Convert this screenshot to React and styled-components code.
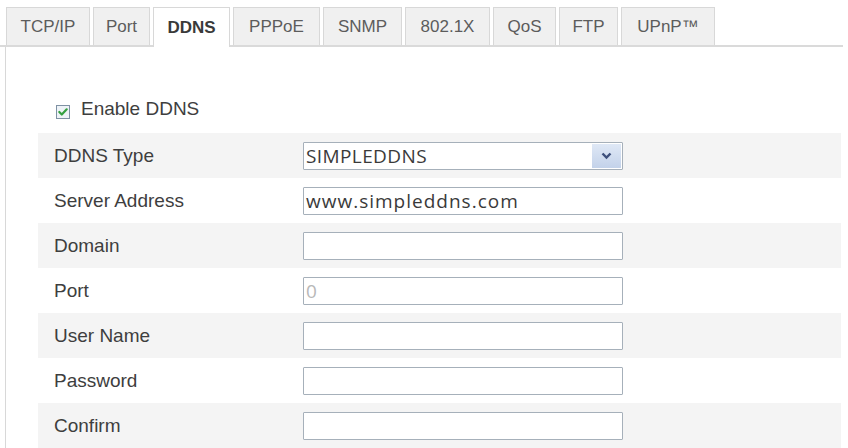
import React from 'react';
import styled, { createGlobalStyle } from 'styled-components';

const GlobalStyle = createGlobalStyle`
  html, body {
    margin: 0;
    padding: 0;
    background: #ffffff;
  }
  body {
    font-family: "Liberation Sans", Arial, sans-serif;
  }
`;

const Page = styled.div`
  width: 848px;
  height: 448px;
  overflow: hidden;
  padding-top: 7px;
  box-sizing: border-box;
  display: flex;
  flex-direction: column;
`;

const TabBar = styled.div`
  display: flex;
  gap: 3px;
  height: 38px;
  padding-left: 6px;
  margin-right: 5px;
  border-bottom: 2px solid #dadada;
`;

const Tab = styled.div`
  width: ${p => p.$width}px;
  box-sizing: border-box;
  display: flex;
  align-items: center;
  justify-content: center;
  font-size: 17px;
  color: ${p => (p.$active ? '#3a3a3a' : '#5c5c5c')};
  font-weight: ${p => (p.$active ? 'bold' : 'normal')};
  background: ${p => (p.$active ? '#ffffff' : '#f0f0f0')};
  border: 1px solid #d8d8d8;
  border-bottom: none;
  height: ${p => (p.$active ? '40px' : '38px')};
  position: relative;
  z-index: ${p => (p.$active ? 1 : 0)};
`;

const Panel = styled.div`
  flex: 1;
  margin-left: 5px;
  border-left: 1px solid #d8d8d8;
  padding-top: 54px;
  display: flex;
  flex-direction: column;
`;

const EnableRow = styled.label`
  display: flex;
  align-items: center;
  gap: 11px;
  margin-left: 50px;
  height: 16px;
  font-size: 19px;
  color: #3e3e3e;
`;

const CheckBox = styled.span`
  display: flex;
  margin-top: 6px;
`;

const Form = styled.div`
  margin-top: 16px;
  margin-left: 32px;
  margin-right: 7px;
  display: flex;
  flex-direction: column;
`;

const Row = styled.div`
  display: grid;
  grid-template-columns: 249px 320px;
  align-items: center;
  height: 45px;
  padding-left: 16px;
  background: ${p => (p.$shaded ? '#f4f4f4' : '#ffffff')};
`;

const Label = styled.span`
  font-size: 19px;
  color: #3e3e3e;
`;

const TextBox = styled.div`
  box-sizing: border-box;
  height: 28px;
  border: 1px solid #a6b0ba;
  border-radius: 1px;
  background: #ffffff;
  display: flex;
  align-items: center;
  padding-left: 2px;
  font-family: "Open Sans", "Liberation Sans", sans-serif;
  font-size: 19px;
  letter-spacing: 1px;
  color: ${p => (p.$placeholder ? '#b8b8b8' : '#3a3a3a')};
`;

const SelectBox = styled(TextBox)`
  padding-right: 1px;
  justify-content: space-between;
  letter-spacing: 0.4px;
`;

const ArrowButton = styled.span`
  width: 29px;
  height: 24px;
  display: flex;
  align-items: center;
  justify-content: center;
  background: linear-gradient(#dfe8f6, #c3d2ea);
`;

const tabs = [
  { name: 'TCP/IP', width: 84 },
  { name: 'Port', width: 57 },
  { name: 'DDNS', width: 77, active: true },
  { name: 'PPPoE', width: 87 },
  { name: 'SNMP', width: 79 },
  { name: '802.1X', width: 85 },
  { name: 'QoS', width: 63 },
  { name: 'FTP', width: 59 },
  { name: 'UPnP™', width: 94 },
];

const fields = [
  { label: 'Server Address', value: 'www.simpleddns.com' },
  { label: 'Domain', value: '' },
  { label: 'Port', value: '0', placeholder: true },
  { label: 'User Name', value: '' },
  { label: 'Password', value: '' },
  { label: 'Confirm', value: '' },
];

const CheckIcon = () => (
  <svg width="14" height="14" viewBox="0 0 14 14">
    <rect x="0.5" y="0.5" width="13" height="13" fill="#eef3f7" stroke="#7f91a4" />
    <path d="M3.3 7 L5.8 9.5 L10.7 4.3" fill="none" stroke="#34a040" strokeWidth="2.2" strokeLinecap="round" strokeLinejoin="round" />
  </svg>
);

const ChevronIcon = () => (
  <svg width="11" height="8" viewBox="0 0 11 8">
    <path d="M1.5 1.5 L5.5 5.5 L9.5 1.5" fill="none" stroke="#3d4f7c" strokeWidth="2.4" />
  </svg>
);

export default function App() {
  return (
    <>
      <GlobalStyle />
      <Page>
        <TabBar>
          {tabs.map(t => (
            <Tab key={t.name} $width={t.width} $active={t.active}>{t.name}</Tab>
          ))}
        </TabBar>
        <Panel>
          <EnableRow>
            <CheckBox><CheckIcon /></CheckBox>
            Enable DDNS
          </EnableRow>
          <Form>
            <Row $shaded>
              <Label>DDNS Type</Label>
              <SelectBox>
                SIMPLEDDNS
                <ArrowButton><ChevronIcon /></ArrowButton>
              </SelectBox>
            </Row>
            {fields.map((f, i) => (
              <Row key={f.label} $shaded={i % 2 === 1}>
                <Label>{f.label}</Label>
                <TextBox $placeholder={f.placeholder}>{f.value}</TextBox>
              </Row>
            ))}
          </Form>
        </Panel>
      </Page>
    </>
  );
}
